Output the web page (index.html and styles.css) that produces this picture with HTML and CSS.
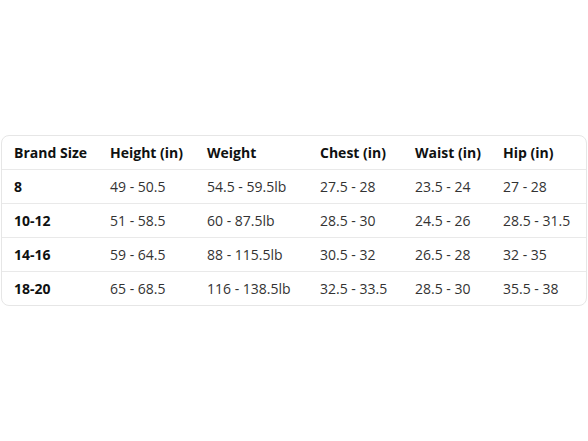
FILE: index.html
```html
<!DOCTYPE html>
<html>
<head>
<meta charset="utf-8">
<link rel="stylesheet" href="styles.css">
</head>
<body>
<div class="page">
  <div class="chart">
    <div class="row head">
      <div class="cell">Brand Size</div>
      <div class="cell">Height (in)</div>
      <div class="cell">Weight</div>
      <div class="cell">Chest (in)</div>
      <div class="cell">Waist (in)</div>
      <div class="cell">Hip (in)</div>
    </div>
    <div class="row">
      <div class="cell key">8</div>
      <div class="cell">49 - 50.5</div>
      <div class="cell">54.5 - 59.5lb</div>
      <div class="cell">27.5 - 28</div>
      <div class="cell">23.5 - 24</div>
      <div class="cell">27 - 28</div>
    </div>
    <div class="row">
      <div class="cell key">10-12</div>
      <div class="cell">51 - 58.5</div>
      <div class="cell">60 - 87.5lb</div>
      <div class="cell">28.5 - 30</div>
      <div class="cell">24.5 - 26</div>
      <div class="cell">28.5 - 31.5</div>
    </div>
    <div class="row">
      <div class="cell key">14-16</div>
      <div class="cell">59 - 64.5</div>
      <div class="cell">88 - 115.5lb</div>
      <div class="cell">30.5 - 32</div>
      <div class="cell">26.5 - 28</div>
      <div class="cell">32 - 35</div>
    </div>
    <div class="row">
      <div class="cell key">18-20</div>
      <div class="cell">65 - 68.5</div>
      <div class="cell">116 - 138.5lb</div>
      <div class="cell">32.5 - 33.5</div>
      <div class="cell">28.5 - 30</div>
      <div class="cell">35.5 - 38</div>
    </div>
  </div>
</div>
</body>
</html>
```
FILE: styles.css
```css
html, body {
  margin: 0;
  padding: 0;
  background: #ffffff;
}
.page {
  padding: 135px 1px 0 1px;
  font-family: "Open Sans", "Liberation Sans", sans-serif;
  font-size: 14px;
  color: #333333;
}
.chart {
  width: 584px;
  border: 1px solid #e6e6e6;
  border-radius: 8px;
  overflow: hidden;
}
.row {
  display: grid;
  grid-template-columns: 96px 97px 113px 95px 88px 95px;
  height: 34px;
  align-items: center;
  border-top: 1px solid #e9e9e9;
  box-sizing: border-box;
}
.row.head {
  border-top: none;
  height: 33px;
}
.cell {
  padding-left: 12px;
  padding-bottom: 1px;
  white-space: nowrap;
}
.head .cell,
.cell.key {
  font-weight: 700;
  color: #0f1111;
}
```
